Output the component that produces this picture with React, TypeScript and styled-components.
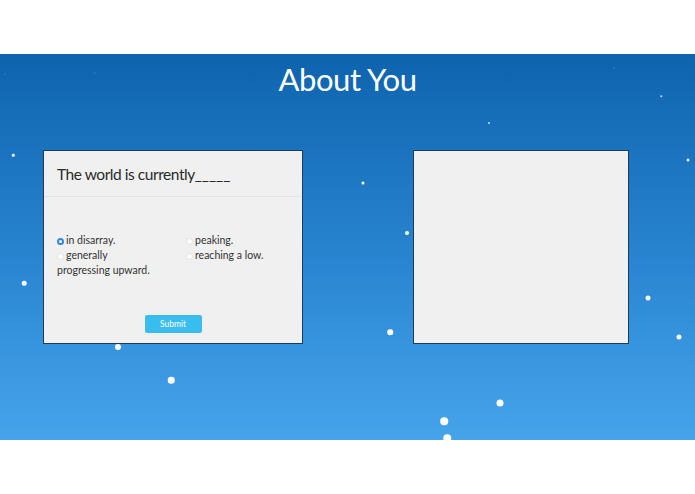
import React from "react";
import styled, { createGlobalStyle } from "styled-components";

const GlobalStyle = createGlobalStyle`
  html, body { margin: 0; padding: 0; background: #ffffff; }
  body { font-family: Lato, "Open Sans", "Liberation Sans", sans-serif; }
  * { box-sizing: border-box; }
`;

const Page = styled.div`
  width: 695px;
  height: 494px;
  padding-top: 54px;
  background: #ffffff;
`;

const Hero = styled.section`
  position: relative;
  height: 386px;
  overflow: hidden;
  background: linear-gradient(180deg, #0e63ae 0%, #2a86d2 55%, #46a4eb 100%);
`;

const Title = styled.h1`
  margin: 0;
  padding-top: 7px;
  text-align: center;
  color: #ffffff;
  font-weight: 400;
  font-size: 31px;
  line-height: 36px;
  letter-spacing: -0.4px;
`;

const CardRow = styled.div`
  position: relative;
  z-index: 1;
  display: flex;
  align-items: flex-start;
  gap: 110px;
  margin-top: 53px;
  padding-left: 43px;
`;

const Card = styled.div<{ $w: number }>`
  width: ${(p) => p.$w}px;
  height: 194px;
  background: #f0f0f0;
  border: 1.5px solid #1d3a56;
  display: flex;
  flex-direction: column;
`;

const CardHeader = styled.div`
  height: 46px;
  display: flex;
  align-items: center;
  padding: 0 13px;
  border-bottom: 1px solid #e3e3e3;
  color: #2a2a2a;
  font-size: 15.5px;
  letter-spacing: -0.45px;
`;

const Blank = styled.span`
  letter-spacing: 0;
`;

const CardBody = styled.div`
  flex: 1;
  padding: 36px 13px 0;
`;

const Options = styled.div`
  display: grid;
  grid-template-columns: 100px 1fr;
  column-gap: 29px;
  color: #333333;
  font-size: 10.5px;
  line-height: 15px;
`;

const Option = styled.div``;

const Radio = styled.span<{ $checked?: boolean }>`
  display: inline-block;
  width: 7px;
  height: 7px;
  margin-right: 2px;
  border-radius: 50%;
  vertical-align: -0.5px;
  background: #ffffff;
  border: ${(p) => (p.$checked ? "2.5px solid #2f86e0" : "0.5px solid #e2e2e2")};
`;

const CardFooter = styled.div`
  display: flex;
  justify-content: center;
  padding-bottom: 10px;
`;

const SubmitButton = styled.button`
  width: 57px;
  height: 18px;
  border: none;
  border-radius: 2px;
  background: #38bdee;
  color: #ffffff;
  font-family: Lato, "Open Sans", sans-serif;
  font-size: 8.5px;
  padding: 0;
`;

const Dot = styled.span`
  position: absolute;
  border-radius: 50%;
  background: #ffffff;
  transform: translate(-50%, -50%);
`;

const dots: Array<[number, number, number, number]> = [
  [5, 20, 1, 0.4],
  [95, 19, 1, 0.4],
  [614, 14, 1, 0.5],
  [661, 42, 1.5, 0.7],
  [489, 69, 2, 0.8],
  [13, 101, 2.5, 0.9],
  [688, 106, 3, 0.9],
  [363, 129, 3, 1],
  [407, 179, 4, 1],
  [24, 229, 4.5, 1],
  [648, 244, 5, 1],
  [390, 278, 5.5, 1],
  [679, 283, 5, 1],
  [118, 293, 6, 1],
  [171, 326, 6.5, 1],
  [500, 349, 7, 1],
  [444, 367, 7.5, 1],
  [447, 384, 7.5, 1],
];

export default function App() {
  return (
    <>
      <GlobalStyle />
      <Page>
        <Hero>
          {dots.map(([x, y, s, o], i) => (
            <Dot
              key={i}
              style={{ left: x, top: y, width: s, height: s, opacity: o }}
            />
          ))}
          <Title>About You</Title>
          <CardRow>
            <Card $w={260}>
              <CardHeader>
                The world is currently<Blank>_____</Blank>
              </CardHeader>
              <CardBody>
                <Options>
                  <Option>
                    <Radio $checked />in disarray.
                  </Option>
                  <Option>
                    <Radio />peaking.
                  </Option>
                  <Option>
                    <Radio />generally progressing upward.
                  </Option>
                  <Option>
                    <Radio />reaching a low.
                  </Option>
                </Options>
              </CardBody>
              <CardFooter>
                <SubmitButton>Submit</SubmitButton>
              </CardFooter>
            </Card>
            <Card $w={216} />
          </CardRow>
        </Hero>
      </Page>
    </>
  );
}
